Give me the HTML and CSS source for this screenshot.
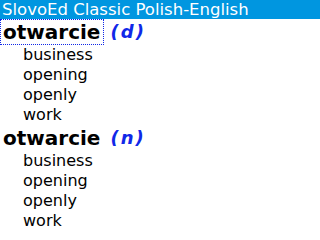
FILE: index.html
```html
<!DOCTYPE html>
<html>
<head>
<meta charset="utf-8">
<link rel="stylesheet" href="styles.css">
</head>
<body>
<div class="title">SlovoEd Classic Polish-English</div>
<div class="entry">
  <div class="head"><span class="word sel">otwarcie</span> <span class="pos">(d)</span></div>
  <div class="tr">business</div>
  <div class="tr">opening</div>
  <div class="tr">openly</div>
  <div class="tr">work</div>
</div>
<div class="entry">
  <div class="head"><span class="word">otwarcie</span> <span class="pos">(n)</span></div>
  <div class="tr">business</div>
  <div class="tr">opening</div>
  <div class="tr">openly</div>
  <div class="tr">work</div>
</div>
</body>
</html>
```
FILE: styles.css
```css
html, body {
  margin: 0;
  padding: 0;
  width: 320px;
  height: 240px;
  overflow: hidden;
  background: #ffffff;
  font-family: "DejaVu Sans", sans-serif;
  color: #000000;
}
.title {
  background: #0096e0;
  color: #ffffff;
  font-size: 16.5px;
  height: 19px;
  line-height: 19px;
  padding-left: 2px;
  white-space: nowrap;
}
.head {
  height: 26px;
  line-height: 26px;
  white-space: nowrap;
}
.word {
  display: inline-block;
  vertical-align: top;
  font-weight: bold;
  font-size: 20px;
  line-height: 24px;
  padding: 0 3px 0 2px;
  border: 1px dotted transparent;
}
.word.sel {
  border-color: #1028e8;
}
.pos {
  color: #1028e8;
  font-weight: bold;
  font-style: italic;
  font-size: 18px;
  letter-spacing: 2px;
  margin-left: 1px;
}
.tr {
  padding-left: 23px;
  font-size: 16px;
  height: 20px;
  line-height: 20px;
}
```
